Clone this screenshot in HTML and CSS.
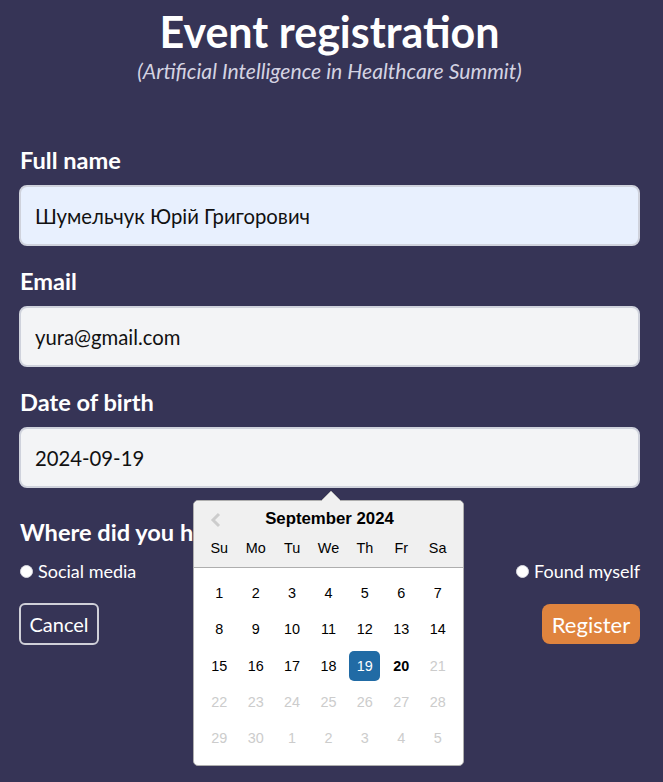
FILE: index.html
```html
<!DOCTYPE html>
<html lang="en">
<head>
<meta charset="utf-8">
<title>Event registration</title>
<link rel="stylesheet" href="styles.css">
</head>
<body>
<main class="page">
  <header class="head">
    <h1 class="title">Event registration</h1>
    <p class="subtitle">(Artificial Intelligence in Healthcare Summit)</p>
  </header>
  <form class="form">
    <div class="field">
      <label class="label" for="name">Full name</label>
      <input class="input input-autofill" id="name" type="text" value="Шумельчук Юрій Григорович">
    </div>
    <div class="field">
      <label class="label" for="email">Email</label>
      <input class="input" id="email" type="email" value="yura@gmail.com">
    </div>
    <div class="field field-date">
      <label class="label" for="dob">Date of birth</label>
      <input class="input" id="dob" type="text" value="2024-09-19">
      <div class="dp">
        <svg class="dp-arrow" width="22" height="12" viewBox="0 0 22 12"><path d="M0 12 L11 1 L22 12 Z" fill="#f0f0f0"/><path d="M0.5 11.5 L11 1 L21.5 11.5" fill="none" stroke="#aeaeae" stroke-width="1"/></svg>
        <div class="dp-head">
          <svg class="dp-prev" width="12" height="16" viewBox="0 0 12 16"><polyline points="9,2 3,8 9,14" fill="none" stroke="#cccccc" stroke-width="3"/></svg>
          <div class="dp-month">September 2024</div>
          <div class="dp-row">
            <span class="dp-name">Su</span><span class="dp-name">Mo</span><span class="dp-name">Tu</span><span class="dp-name">We</span><span class="dp-name">Th</span><span class="dp-name">Fr</span><span class="dp-name">Sa</span>
          </div>
        </div>
        <div class="dp-grid">
          <span class="dp-day">1</span><span class="dp-day">2</span><span class="dp-day">3</span><span class="dp-day">4</span><span class="dp-day">5</span><span class="dp-day">6</span><span class="dp-day">7</span>
          <span class="dp-day">8</span><span class="dp-day">9</span><span class="dp-day">10</span><span class="dp-day">11</span><span class="dp-day">12</span><span class="dp-day">13</span><span class="dp-day">14</span>
          <span class="dp-day">15</span><span class="dp-day">16</span><span class="dp-day">17</span><span class="dp-day">18</span><span class="dp-day dp-selected">19</span><span class="dp-day dp-today">20</span><span class="dp-day dp-off">21</span>
          <span class="dp-day dp-off">22</span><span class="dp-day dp-off">23</span><span class="dp-day dp-off">24</span><span class="dp-day dp-off">25</span><span class="dp-day dp-off">26</span><span class="dp-day dp-off">27</span><span class="dp-day dp-off">28</span>
          <span class="dp-day dp-off">29</span><span class="dp-day dp-off">30</span><span class="dp-day dp-off">1</span><span class="dp-day dp-off">2</span><span class="dp-day dp-off">3</span><span class="dp-day dp-off">4</span><span class="dp-day dp-off">5</span>
        </div>
      </div>
    </div>
    <div class="source">
      <div class="label source-label">Where did you hear about us?</div>
      <div class="radios">
        <label class="radio"><input type="radio" name="src" class="radio-dot"> Social media</label>
        <label class="radio"><input type="radio" name="src" class="radio-dot"> Friends</label>
        <label class="radio"><input type="radio" name="src" class="radio-dot"> Found myself</label>
      </div>
    </div>
    <div class="actions">
      <button type="button" class="btn btn-cancel">Cancel</button>
      <button type="submit" class="btn btn-register">Register</button>
    </div>
  </form>
</main>
</body>
</html>
```
FILE: styles.css
```css
* { box-sizing: border-box; }
html, body { margin: 0; }
body {
  background: #363456;
  color: #ffffff;
  font-family: Lato, "Open Sans", sans-serif;
}
.page { padding: 8px 23px 128px 19px; }
.title {
  margin: 0;
  font-size: 43px;
  line-height: 48px;
  font-weight: 700;
  text-align: center;
}
.subtitle {
  margin: 3px 0 0;
  font-size: 21.2px;
  line-height: 24px;
  font-style: italic;
  color: #d4d3e2;
  text-align: center;
}
.form { margin-top: 63px; display: flex; flex-direction: column; }
.field { display: flex; flex-direction: column; position: relative; margin-bottom: 21px; }
.label {
  font-size: 23.6px;
  line-height: 28px;
  font-weight: 700;
  margin-bottom: 11px;
  padding-left: 1px;
}
.input {
  height: 61px;
  border: 2px solid #cfd2dc;
  border-radius: 8px;
  background: #f3f4f6;
  padding: 0 14px;
  font-family: inherit;
  font-size: 20.3px;
  color: #111111;
  outline: none;
}
.input-autofill { background: #e8f0fe; }

.dp {
  position: absolute;
  top: calc(100% + 12px);
  left: 174px;
  width: 271px;
  background: #ffffff;
  border: 1px solid #aeaeae;
  border-radius: 5px;
  font-family: "Liberation Sans", Arial, sans-serif;
  color: #000000;
  z-index: 5;
}
.dp-arrow { position: absolute; top: -11px; left: 126px; display: block; }
.dp-head {
  position: relative;
  background: #f0f0f0;
  border-bottom: 1px solid #aeaeae;
  border-radius: 5px 5px 0 0;
  padding: 8px 0 3px;
}
.dp-prev { position: absolute; left: 16px; top: 11px; display: block; }
.dp-month {
  text-align: center;
  font-weight: 700;
  font-size: 16.8px;
  line-height: 20px;
  margin-bottom: 4px;
  padding-left: 2px;
}
.dp-row, .dp-grid {
  display: grid;
  grid-template-columns: repeat(7, 36.4px);
  justify-content: center;
}
.dp-grid { grid-auto-rows: 36.3px; padding: 7px 0 9px; }
.dp-name {
  padding: 7px 0 7px;
  line-height: 17px;
  text-align: center;
  font-size: 14.4px;
}
.dp-day {
  justify-self: center;
  align-self: center;
  width: 31px;
  height: 30px;
  line-height: 30px;
  text-align: center;
  font-size: 14.4px;
  border-radius: 5px;
}
.dp-selected { background: #216ba5; color: #ffffff; }
.dp-today { font-weight: 700; }
.dp-off { color: #cccccc; }

.source { margin-top: 9px; }
.source-label { margin-bottom: 13px; }
.radios { display: flex; justify-content: space-between; align-items: center; }
.radio {
  display: flex;
  align-items: center;
  gap: 5px;
  font-size: 18px;
  line-height: 24px;
}
.radio-dot {
  appearance: none;
  -webkit-appearance: none;
  margin: 0 0 0 1px;
  width: 13px;
  height: 13px;
  border-radius: 50%;
  background: #ffffff;
  border: 1px solid #d8d8e0;
}
.actions {
  margin-top: 20px;
  display: flex;
  justify-content: space-between;
  align-items: center;
}
.btn { font-family: inherit; color: #ffffff; cursor: pointer; }
.btn-cancel {
  height: 42px;
  width: 80px;
  background: transparent;
  border: 2px solid #d0d0d8;
  border-radius: 6px;
  font-size: 20px;
  padding: 0;
}
.btn-register {
  height: 40px;
  width: 98px;
  background: #e0843e;
  border: none;
  border-radius: 8px;
  font-size: 22px;
  padding: 0;
}
```
